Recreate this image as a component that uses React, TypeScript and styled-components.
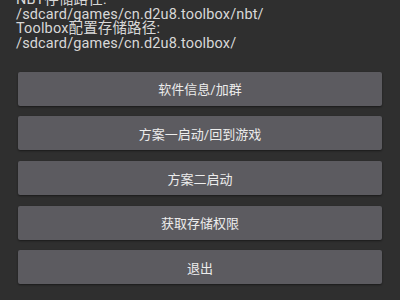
import React from "react";
import styled, { createGlobalStyle } from "styled-components";

const Global = createGlobalStyle`
  html, body { margin: 0; padding: 0; background: #2f2f2f; }
  body { width: 400px; height: 300px; overflow: hidden; }
`;

const Screen = styled.div`
  width: 400px;
  height: 300px;
  overflow: hidden;
  background: #2f2f2f;
  font-family: "Roboto", "Noto Sans CJK SC", sans-serif;
  display: flex;
  flex-direction: column;
`;

const Info = styled.div`
  margin-top: -7px;
  padding: 0 16px;
  color: #d8d8d8;
  font-size: 14.5px;
  letter-spacing: 0.15px;
  line-height: 14.6px;
`;

const Line = styled.div`
  white-space: nowrap;
`;

const Buttons = styled.div`
  display: flex;
  flex-direction: column;
  gap: 10.6px;
  padding: 20.5px 18px 0;
`;

const Button = styled.button`
  height: 34px;
  border: none;
  border-radius: 2px;
  background: #5c5b60;
  color: #ececec;
  font-family: "Roboto", "Noto Sans CJK SC", sans-serif;
  font-size: 13px;
  box-shadow: 0 1px 2px rgba(0, 0, 0, 0.45);
  display: flex;
  align-items: center;
  justify-content: center;
  padding: 0;
`;

const lines = [
  "NBT存储路径:",
  "/sdcard/games/cn.d2u8.toolbox/nbt/",
  "Toolbox配置存储路径:",
  "/sdcard/games/cn.d2u8.toolbox/",
];

const labels = ["软件信息/加群", "方案一启动/回到游戏", "方案二启动", "获取存储权限", "退出"];

export default function App() {
  return (
    <>
      <Global />
      <Screen>
        <Info>
          {lines.map((l) => (
            <Line key={l}>{l}</Line>
          ))}
        </Info>
        <Buttons>
          {labels.map((l) => (
            <Button key={l}>{l}</Button>
          ))}
        </Buttons>
      </Screen>
    </>
  );
}
